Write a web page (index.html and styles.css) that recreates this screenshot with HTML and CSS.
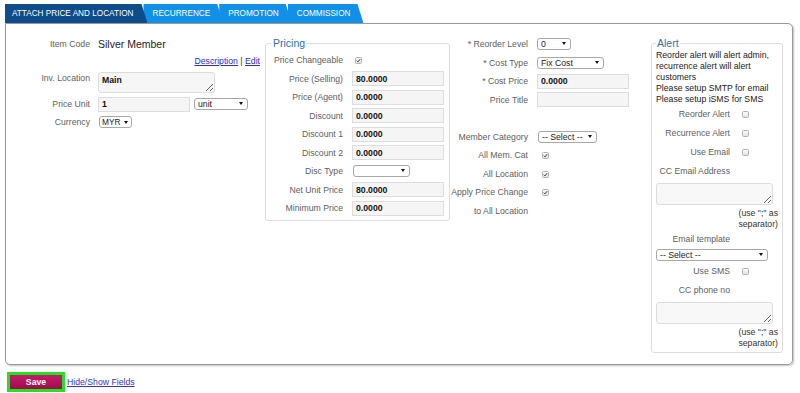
FILE: index.html
```html
<!DOCTYPE html>
<html>
<head>
<meta charset="utf-8">
<link rel="stylesheet" href="styles.css">
</head>
<body>
<div class="tabs">
  <div class="tab active">Attach Price and Location</div>
  <div class="tab t2">Recurrence</div>
  <div class="tab t3">Promotion</div>
  <div class="tab t4">Commission</div>
</div>
<div class="panel">
  <div class="col-left">
    <div class="lbl">Item Code</div><div class="val-big">Silver Member</div>
    <div class="desc"><a href="#">Description</a> | <a href="#">Edit</a></div>
    <div class="lbl lbl-top">Inv. Location</div><div class="top"><textarea class="ta-loc">Main</textarea></div>
    <div class="lbl">Price Unit</div>
    <div class="line"><input class="inp" type="text" value="1"><span class="sel ml4"><select class="s-unit"><option>unit</option></select></span></div>
    <div class="lbl">Currency</div>
    <div class="line"><span class="sel ml1 sel-cur"><select class="s-cur"><option>MYR</option></select></span></div>
  </div>

  <fieldset class="pricing">
    <legend>Pricing</legend>
    <div class="pgrid">
      <div class="lbl">Price Changeable</div><div><span class="cb on ml3"><svg viewBox="0 0 6 6" width="5" height="5"><path d="M1 3.2 L2.4 4.6 L5 1.4" fill="none" stroke="#333" stroke-width="1.2"/></svg></span></div>
      <div class="lbl">Price (Selling)</div><div><input class="inp" type="text" value="80.0000"></div>
      <div class="lbl">Price (Agent)</div><div><input class="inp" type="text" value="0.0000"></div>
      <div class="lbl">Discount</div><div><input class="inp" type="text" value="0.0000"></div>
      <div class="lbl">Discount 1</div><div><input class="inp" type="text" value="0.0000"></div>
      <div class="lbl">Discount 2</div><div><input class="inp" type="text" value="0.0000"></div>
      <div class="lbl">Disc Type</div><div><span class="sel ml1"><select class="s-disc"><option></option></select></span></div>
      <div class="lbl">Net Unit Price</div><div><input class="inp" type="text" value="80.0000"></div>
      <div class="lbl">Minimum Price</div><div><input class="inp" type="text" value="0.0000"></div>
    </div>
  </fieldset>

  <div class="col-mid">
    <div class="lbl">* Reorder Level</div><div><span class="sel"><select class="s-reo"><option>0</option></select></span></div>
    <div class="lbl">* Cost Type</div><div><span class="sel"><select class="s-cost"><option>Fix Cost</option></select></span></div>
    <div class="lbl">* Cost Price</div><div><input class="inp" type="text" value="0.0000"></div>
    <div class="lbl">Price Title</div><div><input class="inp" type="text" value=""></div>
    <div class="lbl"></div><div></div>
    <div class="lbl">Member Category</div><div><span class="sel ml1"><select class="s-mem"><option>-- Select --</option></select></span></div>
    <div class="lbl">All Mem. Cat</div><div><span class="cb on ml5"><svg viewBox="0 0 6 6" width="5" height="5"><path d="M1 3.2 L2.4 4.6 L5 1.4" fill="none" stroke="#333" stroke-width="1.2"/></svg></span></div>
    <div class="lbl">All Location</div><div><span class="cb on ml5"><svg viewBox="0 0 6 6" width="5" height="5"><path d="M1 3.2 L2.4 4.6 L5 1.4" fill="none" stroke="#333" stroke-width="1.2"/></svg></span></div>
    <div class="lbl">Apply Price Change</div><div><span class="cb on ml5"><svg viewBox="0 0 6 6" width="5" height="5"><path d="M1 3.2 L2.4 4.6 L5 1.4" fill="none" stroke="#333" stroke-width="1.2"/></svg></span></div>
    <div class="lbl">to All Location</div><div></div>
  </div>

  <fieldset class="alert">
    <legend>Alert</legend>
    <div class="atext">Reorder alert will alert admin,<br>recurrence alert will alert<br>customers<br>Please setup SMTP for email<br>Please setup iSMS for SMS</div>
    <div class="arow"><span class="lbl">Reorder Alert</span><span><span class="cb ml1"></span></span></div>
    <div class="arow"><span class="lbl">Recurrence Alert</span><span><span class="cb ml1"></span></span></div>
    <div class="arow"><span class="lbl">Use Email</span><span><span class="cb ml1"></span></span></div>
    <div class="arow"><span class="lbl">CC Email Address</span></div>
    <textarea class="ta-alert"></textarea>
    <div class="note">(use ";" as<br>separator)</div>
    <div class="arow h18"><span class="lbl">Email template</span></div>
    <span class="sel blk"><select class="s-tpl"><option>-- Select --</option></select></span>
    <div class="arow"><span class="lbl">Use SMS</span><span><span class="cb ml1"></span></span></div>
    <div class="arow h20"><span class="lbl">CC phone no</span></div>
    <textarea class="ta-alert"></textarea>
    <div class="note">(use ";" as<br>separator)</div>
  </fieldset>
</div>
<div class="actions">
  <button class="btn-save" type="button">Save</button>
  <a class="link" href="#">Hide/Show Fields</a>
</div>
</body>
</html>
```

FILE: styles.css
```css
* { box-sizing: border-box; }
body {
  margin: 0;
  padding: 4px 0 0 5px;
  font-family: "Liberation Sans", Arial, sans-serif;
  font-size: 8.7px;
  color: #606060;
  background: #fff;
}
.tabs { display: flex; height: 19px; }
.tab {
  position: relative;
  height: 19px;
  line-height: 19px;
  padding: 0 13px 0 9px;
  margin-left: -4px;
  color: #fff;
  font-size: 8.2px;
  text-transform: uppercase;
  white-space: nowrap;
  background: #1190e8;
  clip-path: polygon(0 0, calc(100% - 6px) 0, 100% 100%, 0 100%);
}
.tab.active { margin-left: 0; padding: 0 14px 0 7px; background: #0e4c8a; z-index: 4; }
.t2 { z-index: 3; }
.t3 { z-index: 2; }
.t4 { z-index: 1; }

.panel {
  display: flex;
  align-items: flex-start;
  width: 788px;
  height: 342px;
  border: 1px solid #999;
  border-radius: 0 5px 5px 5px;
  box-shadow: 1px 1px 2px rgba(0,0,0,.25);
}
.lbl { text-align: right; white-space: nowrap; }

.col-left {
  width: 256px;
  margin-top: 11px;
  display: grid;
  grid-template-columns: 84px 164px;
  grid-template-rows: 18px 16px 26px 18px 18px;
  column-gap: 8px;
  align-items: center;
}
.val-big { font-size: 10.5px; color: #222; }
.desc { grid-column: 1 / -1; text-align: right; padding-right: 2px; color: #333; }
.desc a { color: #2b2bd0; }
.lbl-top { align-self: start; padding-top: 4px; }
.top { align-self: start; }
.line { display: flex; align-items: center; }

textarea {
  display: block;
  font: bold 8.7px "Liberation Sans", Arial, sans-serif;
  color: #111;
  background: #f6f6f6;
  border: 1px solid #ddd;
  border-radius: 3px;
  padding: 2px 3px;
  margin: 0;
}
.ta-loc { margin-top: 3px; width: 117px; height: 21px; }

.inp {
  width: 92px;
  height: 15px;
  margin: 0;
  border: 1px solid #ddd;
  background: #f5f5f5;
  font: bold 8.7px "Liberation Sans", Arial, sans-serif;
  color: #111;
  padding: 0 3px;
  vertical-align: middle;
}

.sel { position: relative; display: inline-block; vertical-align: middle; }
.sel::after {
  content: "";
  position: absolute;
  top: 4px;
  right: 5px;
  border-left: 2.5px solid transparent;
  border-right: 2.5px solid transparent;
  border-top: 3.5px solid #111;
  pointer-events: none;
}
.sel-cur::after { right: 4px; border-left-width: 2px; border-right-width: 2px; border-top-width: 3px; top: 4.5px; }
.sel select {
  -webkit-appearance: none;
  appearance: none;
  display: block;
  height: 12px;
  margin: 0;
  padding: 0 0 0 3px;
  border: 1px solid #a8a8a8;
  border-radius: 3px;
  background: #fff;
  font: 8.7px "Liberation Sans", Arial, sans-serif;
  line-height: 10px;
  color: #222;
}
.sel.blk { display: block; width: 112px; margin-top: 1.5px; }
.s-unit { width: 54px; }
.sel .s-cur { width: 33px; padding-left: 2px; font-size: 8.3px; }
.s-disc { width: 57px; }
.s-reo { width: 34px; }
.s-cost { width: 67px; }
.s-mem { width: 59px; }
.s-tpl { width: 112px; }
.ml1 { margin-left: 1px; }
.ml3 { margin-left: 3px; }
.ml4 { margin-left: 4px; }
.ml5 { margin-left: 5px; }

.cb {
  display: inline-flex;
  align-items: center;
  justify-content: center;
  width: 7px;
  height: 7px;
  border: 1px solid #b0b0b0;
  border-radius: 1.5px;
  background: linear-gradient(#fbfbfb, #e4e4e4);
  vertical-align: middle;
}
.cb svg { display: block; }

fieldset { margin: 0; min-width: 0; border: 1px solid #ddd; border-radius: 3px; }
legend { font-size: 10.5px; line-height: 12px; color: #2d6fb7; }

.pricing { margin: 13px 0 0 3px; width: 185px; padding: 2px 0 2px 0; }
.pricing legend { margin-left: 5px; padding: 0 2px; }
.pgrid {
  display: grid;
  grid-template-columns: 77px 1fr;
  column-gap: 9px;
  grid-auto-rows: 18.5px;
  align-items: center;
}

.col-mid {
  width: 201px;
  margin-top: 11px;
  display: grid;
  grid-template-columns: 78px 1fr;
  column-gap: 9px;
  grid-auto-rows: 18.5px;
  align-items: center;
}

.alert { margin-top: 13px; width: 132px; padding: 0 4px 3px 4px; }
.alert legend { margin-left: 0; padding: 0 1px; }
.atext { line-height: 11px; color: #222; padding-top: 0.5px; }
.arow {
  display: grid;
  grid-template-columns: 74px 1fr;
  column-gap: 11px;
  align-items: center;
  height: 19px;
}
.arow.h18 { height: 18px; }
.arow.h20 { height: 20px; }
.ta-alert { margin-top: 2px; width: 117px; height: 22px; background: #f8f8f8; }
.note { margin-top: 3px; text-align: right; line-height: 11px; color: #333; }

.actions { display: flex; align-items: center; margin-top: 7px; }
.btn-save {
  margin: 0 0 0 2px;
  width: 58px;
  height: 20px;
  padding: 0;
  border: 3px solid #22e022;
  background: linear-gradient(#c71b69, #9c0e4c);
  color: #fff;
  font: bold 8.7px "Liberation Sans", Arial, sans-serif;
}
.link { margin-left: 2px; color: #3434c0; }
```
